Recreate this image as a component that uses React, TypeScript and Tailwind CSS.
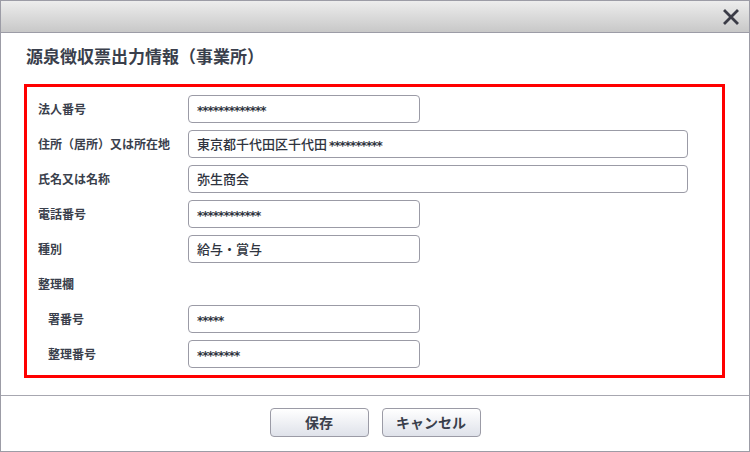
import React from 'react'

const FONT = '"Noto Sans CJK JP", "Noto Sans", sans-serif'

type Row = {
  label: string
  value?: string
  masked?: boolean
  wide?: boolean
  indent?: boolean
  noInput?: boolean
}

const rows: Row[] = [
  { label: '法人番号', value: '*************', masked: true },
  { label: '住所（居所）又は所在地', value: '東京都千代田区千代田', wide: true },
  { label: '氏名又は名称', value: '弥生商会', wide: true },
  { label: '電話番号', value: '************', masked: true },
  { label: '種別', value: '給与・賞与' },
  { label: '整理欄', noInput: true },
  { label: '署番号', value: '*****', masked: true, indent: true },
  { label: '整理番号', value: '********', masked: true, indent: true },
]

function Stars({ text }: { text: string }) {
  return (
    <span
      className="text-[12px] tracking-[-1px] font-bold leading-none translate-y-[2px]"
      style={{ fontFamily: '"DejaVu Sans", sans-serif' }}
    >
      {text}
    </span>
  )
}

function Field({ row }: { row: Row }) {
  const width = row.wide ? 'w-[500px]' : 'w-[232px]'
  return (
    <div
      className={`${width} h-[28px] rounded-[4px] border border-[#9b9ba6] bg-white flex items-center px-[8px] text-[13px] font-medium text-[#2f3440]`}
    >
      {row.masked ? (
        <Stars text={row.value ?? ''} />
      ) : row.label.startsWith('住所') ? (
        <span className="flex items-center gap-[2px]">
          {row.value}
          <Stars text="**********" />
        </span>
      ) : (
        <span>{row.value}</span>
      )}
    </div>
  )
}

export default function App() {
  return (
    <div
      className="w-[750px] h-[452px] bg-white border border-[#9c9ca6] flex flex-col overflow-hidden"
      style={{ fontFamily: FONT }}
    >
      {/* Header */}
      <div className="h-[32px] shrink-0 bg-gradient-to-b from-[#ededed] to-[#c8c8c8] border-b border-[#9c9ca6] flex items-center justify-end pr-[10px]">
        <svg width="16" height="16" viewBox="0 0 16 16" className="mt-[1px]">
          <path d="M2 2 L14 14 M14 2 L2 14" stroke="#3b3c47" strokeWidth="2.8" strokeLinecap="square" />
        </svg>
      </div>

      {/* Body */}
      <div className="flex-1 flex flex-col pl-[23px] pr-[24px]">
        <h1 className="h-[51px] flex items-center pb-[5px] pl-[2px] text-[17px] font-bold text-[#3a3f4c]">
          源泉徴収票出力情報（事業所）
        </h1>
        <div className="border-[3px] border-[#ff0000] pt-[8px] pb-[7px] pl-[11px] flex flex-col gap-[7px]">
          {rows.map((row) => (
            <div key={row.label} className="flex items-center h-[28px]">
              <div
                className={`w-[150px] shrink-0 text-[12px] font-bold text-[#3a3f4c] ${row.indent ? 'pl-[10px]' : ''}`}
              >
                {row.label}
              </div>
              {!row.noInput && <Field row={row} />}
            </div>
          ))}
        </div>
      </div>

      {/* Footer */}
      <div className="h-[56px] shrink-0 border-t border-[#a7a7b0] flex items-center justify-center gap-[13px] pb-[2px]">
        {['保存', 'キャンセル'].map((label) => (
          <button
            key={label}
            className="w-[99px] h-[29px] rounded-[4px] border border-[#9b9ba6] bg-gradient-to-b from-[#ffffff] to-[#dfe2ea] text-[14px] font-bold text-[#3a3f4c]"
          >
            {label}
          </button>
        ))}
      </div>
    </div>
  )
}
